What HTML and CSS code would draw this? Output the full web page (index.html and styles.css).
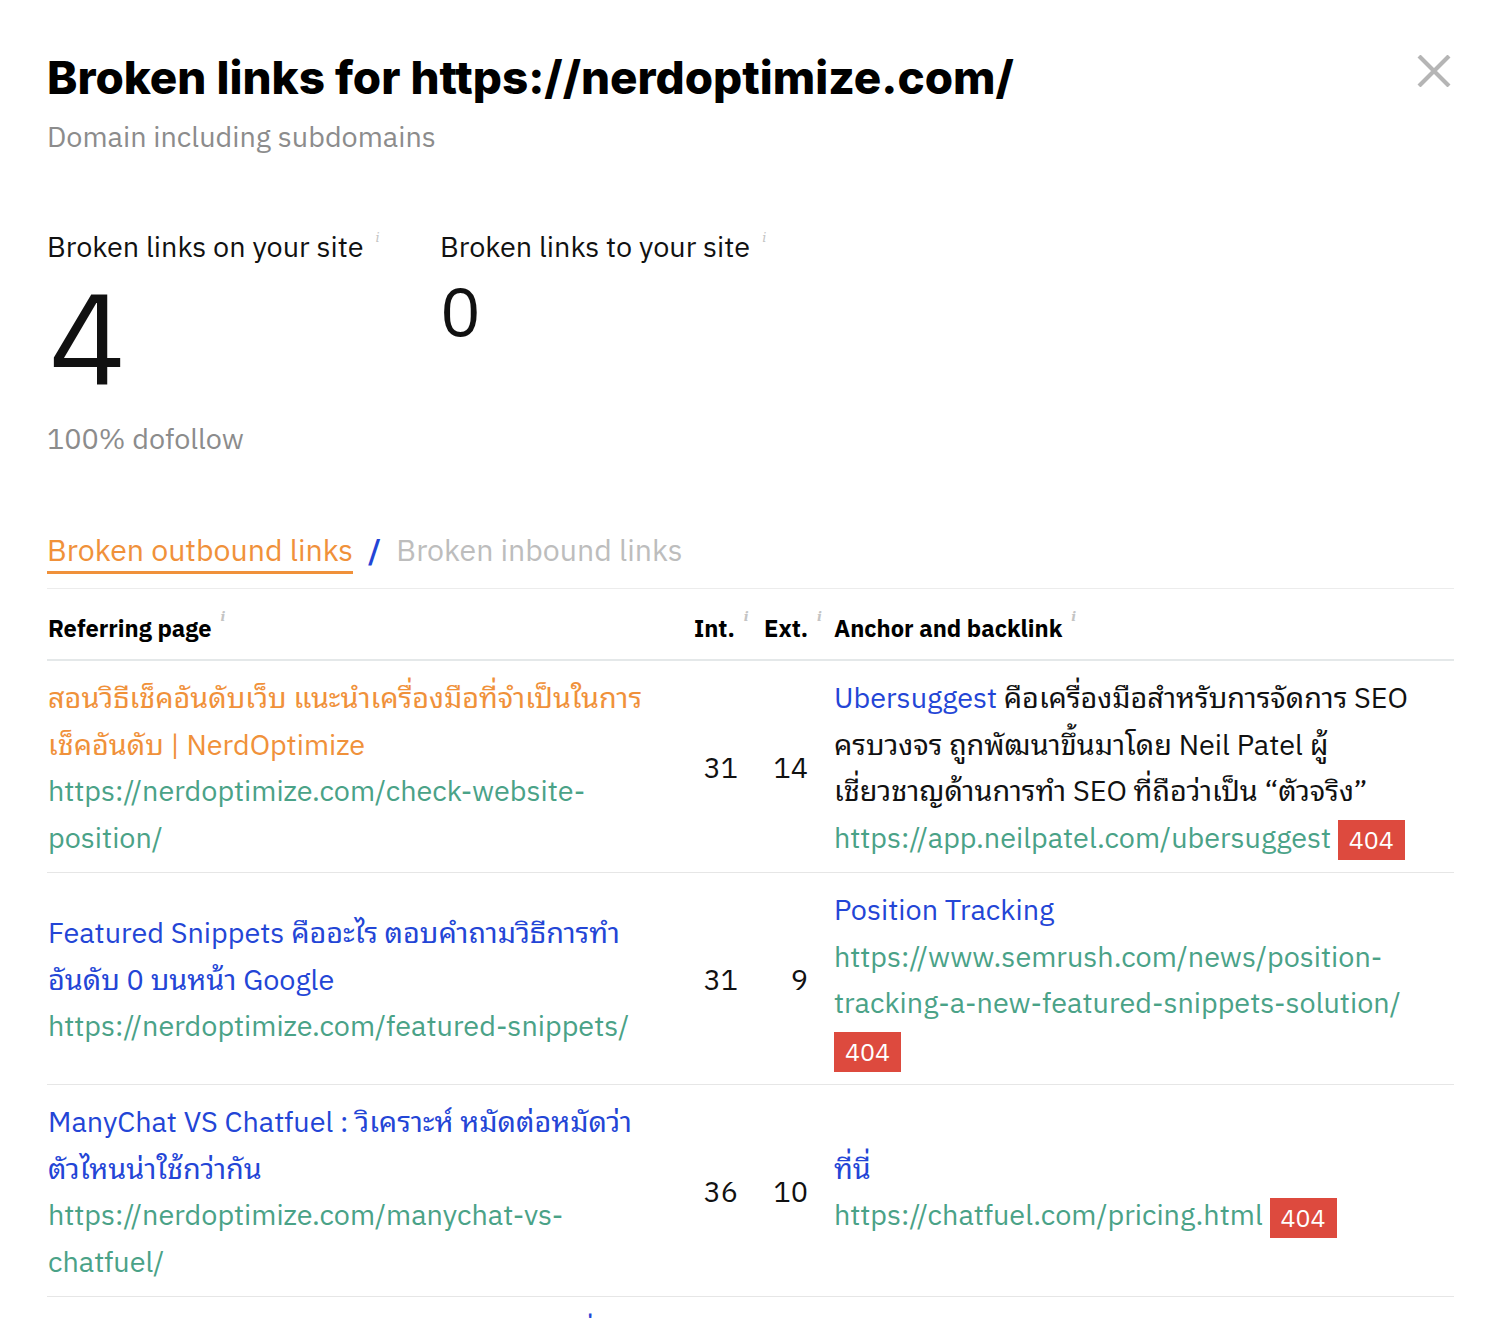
FILE: index.html
```html
<!DOCTYPE html>
<html lang="en">
<head>
<meta charset="utf-8">
<title>Broken links</title>
<link rel="stylesheet" href="styles.css">
</head>
<body>
<div class="modal">
  <header class="head">
    <div class="head-text">
      <h1 class="title">Broken links for https://nerdoptimize.com/</h1>
      <p class="sub">Domain including subdomains</p>
    </div>
    <button class="close" aria-label="Close">
      <svg width="34" height="32" viewBox="0 0 34 32"><path d="M2 1 L32 31 M32 1 L2 31" stroke="#b5b5b5" stroke-width="4.2" fill="none"/></svg>
    </button>
  </header>

  <section class="stats">
    <div class="stat stat-on">
      <div class="stat-label">Broken links on your site<sup class="info">i</sup></div>
      <div class="stat-big">4</div>
      <div class="stat-note">100% dofollow</div>
    </div>
    <div class="stat">
      <div class="stat-label">Broken links to your site<sup class="info">i</sup></div>
      <div class="stat-mid">0</div>
    </div>
  </section>

  <nav class="tabs">
    <span class="tab active">Broken outbound links</span>
    <span class="slash">/</span>
    <span class="tab">Broken inbound links</span>
  </nav>

  <table class="links">
    <colgroup>
      <col class="c-page"><col class="c-num"><col class="c-num"><col class="c-anchor">
    </colgroup>
    <thead>
      <tr>
        <th>Referring page<sup class="info">i</sup></th>
        <th>Int.<sup class="info">i</sup></th>
        <th>Ext.<sup class="info">i</sup></th>
        <th>Anchor and backlink<sup class="info">i</sup></th>
      </tr>
    </thead>
    <tbody>
      <tr>
        <td><a class="ptitle orange">สอนวิธีเช็คอันดับเว็บ แนะนำเครื่องมือที่จำเป็นในการเช็คอันดับ | NerdOptimize</a><br><a class="url">https://nerdoptimize.com/check-website-position/</a></td>
        <td class="num">31</td>
        <td class="num">14</td>
        <td><a class="anchor">Ubersuggest</a> คือเครื่องมือสำหรับการจัดการ SEO ครบวงจร ถูกพัฒนาขึ้นมาโดย Neil Patel ผู้เชี่ยวชาญด้านการทำ SEO ที่ถือว่าเป็น “ตัวจริง”<br><a class="url">https://app.neilpatel.com/ubersuggest</a> <span class="badge">404</span></td>
      </tr>
      <tr>
        <td><a class="ptitle">Featured Snippets คืออะไร ตอบคำถามวิธีการทำอันดับ 0 บนหน้า Google</a><br><a class="url">https://nerdoptimize.com/featured-snippets/</a></td>
        <td class="num">31</td>
        <td class="num">9</td>
        <td><a class="anchor">Position Tracking</a><br><a class="url">https://www.semrush.com/news/position-tracking-a-new-featured-snippets-solution/</a> <span class="badge">404</span></td>
      </tr>
      <tr>
        <td><a class="ptitle">ManyChat VS Chatfuel : วิเคราะห์ หมัดต่อหมัดว่าตัวไหนน่าใช้กว่ากัน</a><br><a class="url">https://nerdoptimize.com/manychat-vs-chatfuel/</a></td>
        <td class="num">36</td>
        <td class="num">10</td>
        <td><a class="anchor">ที่นี่</a><br><a class="url">https://chatfuel.com/pricing.html</a> <span class="badge">404</span></td>
      </tr>
      <tr>
        <td><a class="ptitle">รวม Chatbot สำหรับ Facebook Messenger ที่ใช้งานง่าย ปี 2020</a><br><a class="url">https://nerdoptimize.com/chatbot-facebook-messenger/</a></td>
        <td class="num">12</td>
        <td class="num">8</td>
        <td><a class="anchor">ที่นี่</a><br><a class="url">https://example.com/</a> <span class="badge">404</span></td>
      </tr>
    </tbody>
  </table>
</div>
</body>
</html>
```

FILE: styles.css
```css
html, body {
  margin: 0;
  padding: 0;
  background: #ffffff;
}
body {
  font-family: "IBM Plex Sans", "Noto Sans Thai Looped", Loma, Garuda, Norasi, Sarabun, "Noto Sans Thai", Roboto, sans-serif;
  color: #111111;
  overflow: hidden;
  height: 1318px;
}
.modal {
  padding: 50px 50px 0 47px;
}
.head {
  display: flex;
  justify-content: space-between;
  align-items: flex-start;
}
.title {
  margin: 0;
  font-family: Inter, "Liberation Sans", sans-serif;
  font-weight: 800;
  font-size: 45.8px;
  line-height: 56px;
  color: #000000;
}
.sub {
  margin: 10px 0 0 0;
  font-size: 28.8px;
  line-height: 40px;
  color: #8c8c8c;
}
.close {
  border: 0;
  background: none;
  padding: 0;
  margin: 5px 3px 0 0;
  cursor: pointer;
  line-height: 0;
}
.stats {
  display: flex;
  margin-top: 72px;
}
.stat {
  display: flex;
  flex-direction: column;
  align-items: flex-start;
}
.stat-on {
  width: 393px;
}
.stat-label {
  font-size: 28.8px;
  line-height: 36px;
  color: #111;
}
.info {
  font-family: "DejaVu Serif", serif;
  font-style: italic;
  font-size: 13px;
  color: #c4c4c4;
  vertical-align: top;
  position: relative;
  top: -8px;
  margin-left: 12px;
}
.stat-big {
  font-size: 128px;
  line-height: 120px;
  margin-top: 13px;
  margin-left: 2px;
}
.stat-mid {
  font-size: 68px;
  line-height: 70px;
  margin-top: 12px;
}
.stat-note {
  margin-top: 21px;
  font-size: 28.8px;
  line-height: 40px;
  color: #8c8c8c;
}
.tabs {
  margin-top: 74px;
  display: flex;
  align-items: flex-start;
  gap: 15px;
  padding-bottom: 14px;
  border-bottom: 1px solid #ececec;
  font-size: 30.3px;
  line-height: 36px;
}
.tab {
  color: #bdbdbd;
}
.tab.active {
  color: #f0913a;
  border-bottom: 3px solid #f0913a;
  padding-bottom: 3px;
}
.slash {
  color: #2345d6;
  font-weight: 600;
}
.links {
  width: 100%;
  border-collapse: collapse;
  table-layout: fixed;
}
.c-page { width: 634px; }
.c-num { width: 70px; }
.links th {
  text-align: left;
  font-size: 23.7px;
  font-weight: 700;
  height: 62px;
  padding: 8px 0 0 13px;
  border-bottom: 2px solid #e4e8e9;
  vertical-align: middle;
  color: #000;
}
.links th:first-child {
  padding-left: 1px;
  padding-right: 13px;
}
.links td:first-child {
  padding-left: 1px;
  padding-right: 30px;
}
.links td:last-child {
  padding-right: 28px;
}
.links th .info {
  margin-left: 9px;
  top: -4px;
}
.links td {
  font-size: 28.8px;
  line-height: 46.5px;
  padding: 13px 0 12px 13px;
  border-bottom: 1px solid #e6e6e6;
  vertical-align: middle;
  overflow-wrap: break-word;
}
.links td.num {
  text-align: right;
  padding-right: 13px;
  padding-left: 0;
}
.ptitle {
  color: #2345d6;
}
.ptitle.orange {
  color: #f0913a;
}
.url {
  color: #4aa287;
}
.anchor {
  color: #2345d6;
}
.badge {
  display: inline-block;
  background: #dd4a3e;
  color: #fff;
  font-size: 25px;
  line-height: 40px;
  padding: 0 11px;
  vertical-align: middle;
}
```
